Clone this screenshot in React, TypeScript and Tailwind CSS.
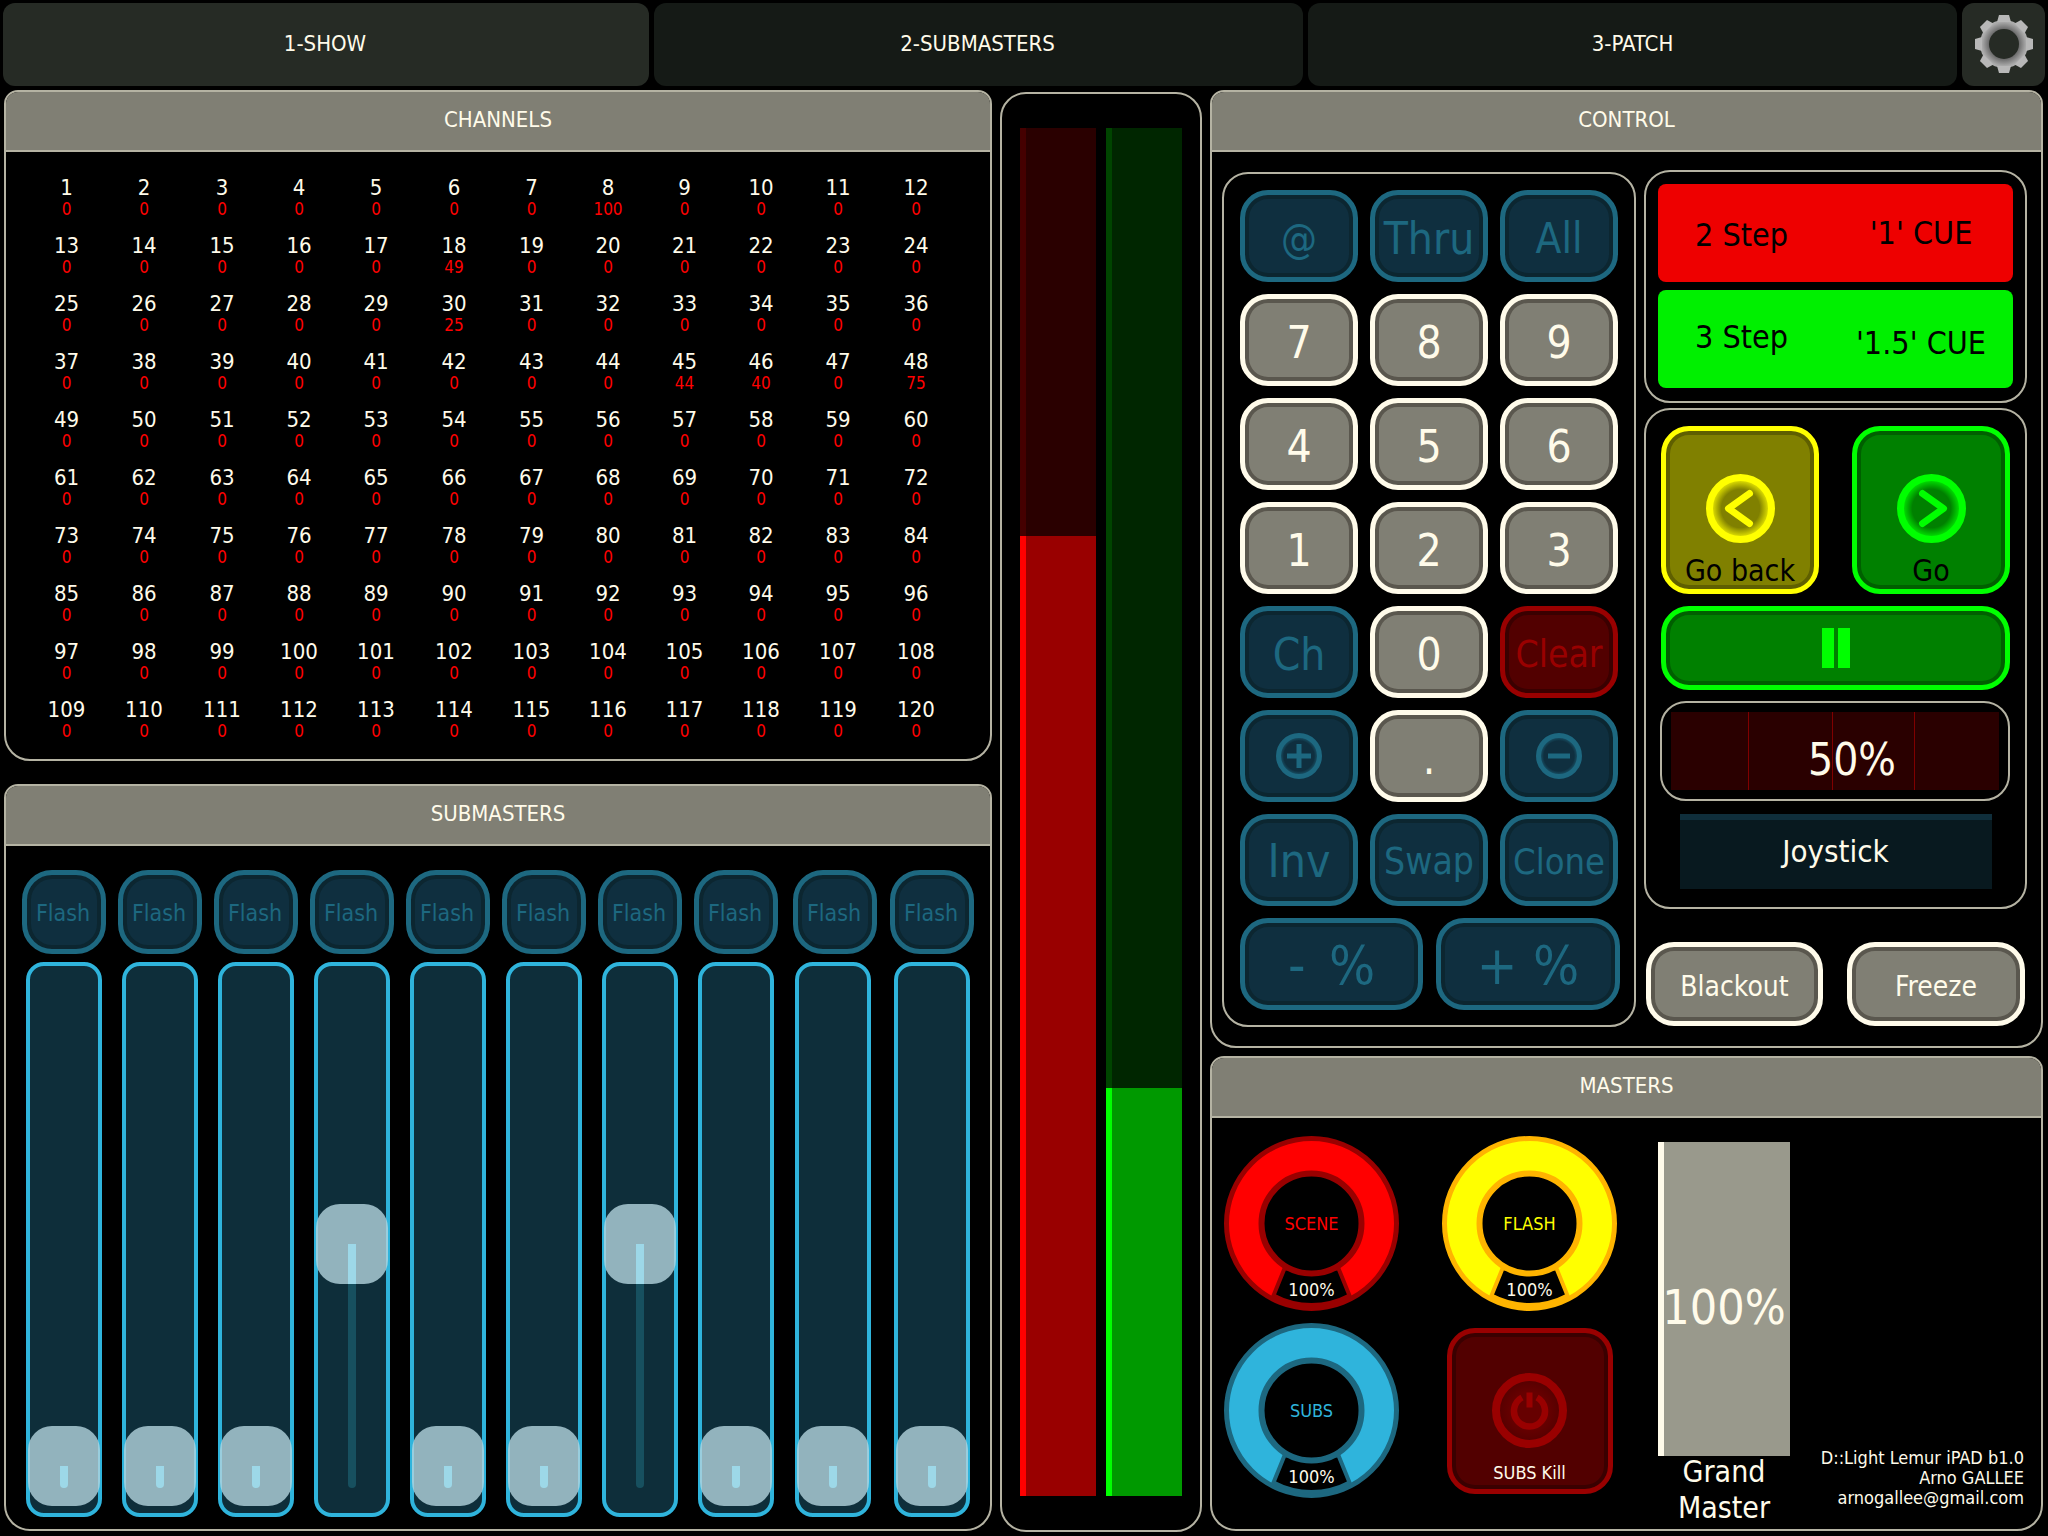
import type { ReactNode } from 'react';

const channelValues: Record<number, number> = { 8: 100, 18: 49, 30: 25, 45: 44, 46: 40, 48: 75 };

function Panel({ title, className, children }: { title: string; className: string; children: ReactNode }) {
    return (
        <section className={`border-2 border-[#b5b3a3] rounded-t-[14px] rounded-b-[26px] overflow-hidden bg-black flex flex-col ${className}`}>
            <div className="h-[60px] shrink-0 bg-[#807f74] border-b-2 border-[#b5b3a3] flex items-center justify-center text-[22px] text-[#fffbea] pb-[3px]">
                {title}
            </div>
            {children}
        </section>
    );
}

const tones = {
    cream: 'border-[#fffbea] bg-[#807f74] text-[#fffbea] shadow-[inset_0_0_0_4px_#5a574e]',
    blue: 'border-[#1d6880] bg-[#0f2f3f] text-[#1d6880] shadow-[inset_0_0_0_4px_#0c2630]',
    red: 'border-[#990000] bg-[#520000] text-[#990000] shadow-[inset_0_0_0_4px_#3a0000]',
    yellow: 'border-[#ffff00] bg-[#808000] text-black shadow-[inset_0_0_0_4px_#5f5f00]',
    green: 'border-[#00ff00] bg-[#008000] text-black shadow-[inset_0_0_0_4px_#005f00]',
};

function Key({ tone, className = '', children }: { tone: keyof typeof tones; className?: string; children: ReactNode }) {
    return (
        <div className={`relative shrink-0 rounded-[28px] border-[5px] flex items-center ${tones[tone]} ${className}`}>
            {children}
        </div>
    );
}

function RoundIcon({ color, bg, children, id, size = 69 }: { color: string; bg: string; children: ReactNode; id: string; size?: number }) {
    return (
        <svg width={size} height={size} viewBox="-34.5 -34.5 69 69" className="shrink-0">
            <defs>
                <radialGradient id={id} cx="0" cy="0" r="31" gradientUnits="userSpaceOnUse">
                    <stop offset="0.62" stopColor={bg} />
                    <stop offset="1" stopColor={color} />
                </radialGradient>
            </defs>
            <circle r="31" fill={`url(#${id})`} stroke={color} strokeWidth="7" />
            {children}
        </svg>
    );
}

function Gear() {
    return (
        <svg width="60" height="60" viewBox="-30 -30 60 60">
            <defs>
                <radialGradient id="gearFill" cx="0" cy="0" r="29" gradientUnits="userSpaceOnUse">
                    <stop offset="0.5" stopColor="#666666" />
                    <stop offset="0.75" stopColor="#a8a8a8" />
                    <stop offset="1" stopColor="#c4c4c4" />
                </radialGradient>
            </defs>
            <circle r="24" fill="url(#gearFill)" />
            {[0, 45, 90, 135, 180, 225, 270, 315].map((deg) => (
                <polygon key={deg} points="-7,-22 -5,-29 5,-29 7,-22" fill="#b8b8b8" transform={`rotate(${deg})`} />
            ))}
            <circle r="15" fill="#262b25" />
        </svg>
    );
}

function Ring({ label, color, edge, labelColor }: { label: string; color: string; edge: string; labelColor: string }) {
    return (
        <div className="relative w-[175px] h-[175px]">
            <svg width="175" height="175" viewBox="-87.5 -87.5 175 175">
                <circle r="85" fill={color} stroke={edge} strokeWidth="5" />
                <path d="M -27 45 L -38 72 A 81 81 0 0 0 38 72 L 27 45 Z" fill="black" stroke={edge} strokeWidth="4" />
                <circle r="50" fill="black" stroke={edge} strokeWidth="6" />
            </svg>
            <div className={`absolute inset-0 flex items-center justify-center text-[18px] pb-[1px] ${labelColor}`}>{label}</div>
            <div className="absolute left-0 right-0 top-[143px] text-center text-[18px] leading-[22px] text-[#fffbea]">100%</div>
        </div>
    );
}

function Meter({ dim, dimEdge, fill, edge, fillHeight }: { dim: string; dimEdge: string; fill: string; edge: string; fillHeight: string }) {
    return (
        <div className="w-[76px] h-full flex flex-col">
            <div className={`flex-1 border-l-[6px] ${dim} ${dimEdge}`} />
            <div className={`border-l-[6px] ${fill} ${edge} ${fillHeight}`} />
        </div>
    );
}

function Fader({ raised = false, className = '' }: { raised?: boolean; className?: string }) {
    return (
        <div className={`relative w-[76px] h-[555px] mx-auto mt-2 border-4 border-[#2fb4dc] rounded-[18px] bg-[#0e2e3a] ${className}`}>
            <div className={`absolute left-[30px] w-2 bottom-[25px] rounded-b-[4px] bg-[#17505f] ${raised ? 'top-[278px]' : 'top-[500px]'}`} />
            <div className={`absolute left-[-2px] right-[-2px] h-20 rounded-[24px] bg-[#b4d4df]/80 ${raised ? 'top-[238px]' : 'top-[460px]'}`} />
            <div className={`absolute left-[30px] w-2 bg-[#9dd8e8] ${raised ? 'top-[278px] h-10' : 'top-[500px] h-[22px] rounded-b-[4px]'}`} />
        </div>
    );
}

function SubmasterStrip({ raised, className = '', faderClass = '' }: { raised?: boolean; className?: string; faderClass?: string }) {
    return (
        <div className={`w-[84px] shrink-0 ${className}`}>
            <Key tone="blue" className="h-[84px] text-[23px] rounded-[30px] justify-center pt-[2px] pr-[2px]">Flash</Key>
            <Fader raised={raised} className={faderClass} />
        </div>
    );
}

export default function App() {
    const channels = Array.from({ length: 120 }, (_, i) => i + 1);

    return (
        <div className="w-[2048px] h-[1536px] bg-black overflow-hidden font-['DejaVu_Sans_Condensed','DejaVu_Sans',sans-serif] font-stretch-condensed text-[#fffbea]">
            {/* tabs */}
            <div className="flex gap-[5px] pt-[3px] pl-[3px] h-[86px]">
                <div className="w-[646px] rounded-[12px] bg-[#262b25] flex items-center justify-center text-[22px] pb-[3px] pr-[2px]">1-SHOW</div>
                <div className="w-[649px] rounded-[12px] bg-[#151a16] flex items-center justify-center text-[22px] pb-[3px] pr-[2px]">2-SUBMASTERS</div>
                <div className="w-[649px] rounded-[12px] bg-[#151a16] flex items-center justify-center text-[22px] pb-[3px]">3-PATCH</div>
                <div className="w-[83px] rounded-[12px] bg-[#262b25] flex items-center justify-center pb-[2px]">
                    <Gear />
                </div>
            </div>

            <div className="flex pt-1 pl-1">
                {/* left column */}
                <div className="w-[988px] shrink-0">
                    <Panel title="CHANNELS" className="h-[671px]">
                        <div className="grid grid-cols-[77px_78px_78px_76px_78px_78px_77px_76px_77px_76px_78px_78px] auto-rows-[58px] pl-[22px] pt-[25px]">
                            {channels.map((n) => (
                                <div key={n} className="text-center">
                                    <div className="text-[22px] leading-[22px]">{n}</div>
                                    <div className="text-[17px] leading-[21px] text-[#ff0000]">{channelValues[n] ?? 0}</div>
                                </div>
                            ))}
                        </div>
                    </Panel>
                    <Panel title="SUBMASTERS" className="h-[747px] mt-[23px]">
                        <div className="flex gap-3 pl-4 pt-[24px]">
                            <SubmasterStrip />
                            <SubmasterStrip />
                            <SubmasterStrip />
                            <SubmasterStrip raised />
                            <SubmasterStrip />
                            <SubmasterStrip />
                            <SubmasterStrip raised />
                            <SubmasterStrip className="mr-[3px]" />
                            <SubmasterStrip className="mr-px" faderClass="-translate-x-[2px]" />
                            <SubmasterStrip />
                        </div>
                    </Panel>
                </div>

                {/* meters */}
                <div className="w-[202px] h-[1440px] shrink-0 ml-2 mt-[2px] border-2 border-[#b5b3a3] rounded-[26px] flex gap-[10px] pl-[18px] pt-[34px] pb-[34px]">
                    <Meter dim="bg-[#2a0000]" dimEdge="border-[#450000]" fill="bg-[#990000]" edge="border-[#ff0000]" fillHeight="h-[960px]" />
                    <Meter dim="bg-[#002600]" dimEdge="border-[#004400]" fill="bg-[#009900]" edge="border-[#00ff00]" fillHeight="h-[408px]" />
                </div>

                {/* right column */}
                <div className="w-[833px] shrink-0 ml-2">
                    <Panel title="CONTROL" className="h-[958px]">
                        <div className="flex items-start pl-[10px]">
                            <div className="w-[414px] h-[855px] mt-5 border-2 border-[#b5b3a3] rounded-[26px] pl-[16px] pt-4">
                                <div className="grid grid-cols-[repeat(3,118px)] auto-rows-[92px] gap-x-3 gap-y-3">
                                    <Key tone="blue" className="justify-center text-[40px] pt-[5px]">@</Key>
                                    <Key tone="blue" className="justify-center text-[44px] pt-[5px]">Thru</Key>
                                    <Key tone="blue" className="justify-center text-[42px] pt-[5px]">All</Key>
                                    <Key tone="cream" className="justify-center text-[44px] pt-[5px]">7</Key>
                                    <Key tone="cream" className="justify-center text-[44px] pt-[5px]">8</Key>
                                    <Key tone="cream" className="justify-center text-[44px] pt-[5px]">9</Key>
                                    <Key tone="cream" className="justify-center text-[44px] pt-[5px]">4</Key>
                                    <Key tone="cream" className="justify-center text-[44px] pt-[5px]">5</Key>
                                    <Key tone="cream" className="justify-center text-[44px] pt-[5px]">6</Key>
                                    <Key tone="cream" className="justify-center text-[44px] pt-[5px]">1</Key>
                                    <Key tone="cream" className="justify-center text-[44px] pt-[5px]">2</Key>
                                    <Key tone="cream" className="justify-center text-[44px] pt-[5px]">3</Key>
                                    <Key tone="blue" className="justify-center text-[44px] pt-[5px]">Ch</Key>
                                    <Key tone="cream" className="justify-center text-[44px] pt-[5px]">0</Key>
                                    <Key tone="red" className="justify-center text-[37px] pt-[5px]">Clear</Key>
                                    <Key tone="blue" className="justify-center">
                                        <svg width="46" height="46" viewBox="-23 -23 46 46">
                                            <defs>
                                                <radialGradient id="plusFill" cx="0" cy="0" r="21" gradientUnits="userSpaceOnUse">
                                                    <stop offset="0.72" stopColor="#0f2f3f" />
                                                    <stop offset="1" stopColor="#1d6880" />
                                                </radialGradient>
                                            </defs>
                                            <circle r="20.5" fill="url(#plusFill)" stroke="#1d6880" strokeWidth="5" />
                                            <path d="M-12 0H12M0-12V12" stroke="#1d6880" strokeWidth="5" />
                                        </svg>
                                    </Key>
                                    <Key tone="cream" className="justify-center text-[44px] pt-[5px]">.</Key>
                                    <Key tone="blue" className="justify-center">
                                        <svg width="46" height="46" viewBox="-23 -23 46 46">
                                            <circle r="20.5" fill="url(#plusFill)" stroke="#1d6880" strokeWidth="5" />
                                            <path d="M-11 0H11" stroke="#1d6880" strokeWidth="5" />
                                        </svg>
                                    </Key>
                                    <Key tone="blue" className="justify-center text-[46px] pt-[3px]">Inv</Key>
                                    <Key tone="blue" className="justify-center text-[37px] pt-[3px]">Swap</Key>
                                    <Key tone="blue" className="justify-center text-[36px] pt-[3px]">Clone</Key>
                                    <div className="col-span-3 flex gap-[13px]">
                                        <Key tone="blue" className="w-[183px] justify-center text-[54px] pt-[2px] [word-spacing:8px]">- %</Key>
                                        <Key tone="blue" className="w-[184px] justify-center text-[54px] pt-[2px]">+ %</Key>
                                    </div>
                                </div>
                            </div>

                            <div className="w-[383px] ml-2 mt-[18px]">
                                <div className="h-[233px] border-2 border-[#b5b3a3] rounded-[26px] px-3 pt-3">
                                    <div className="h-[98px] rounded-[8px] bg-[#ee0000] text-black flex items-center justify-between pl-[37px] text-[32px]">
                                        <span className="mt-1">2 Step</span>
                                        <span className="w-[184px] text-center">'1' CUE</span>
                                    </div>
                                    <div className="h-[98px] mt-2 rounded-[8px] bg-[#00f000] text-black flex items-center justify-between pl-[37px] text-[32px]">
                                        <span className="mb-1">3 Step</span>
                                        <span className="w-[184px] text-center mt-2">'1.5' CUE</span>
                                    </div>
                                </div>

                                <div className="h-[501px] mt-[5px] border-2 border-[#b5b3a3] rounded-[26px] px-[15px] pt-4">
                                    <div className="flex justify-between">
                                        <Key tone="yellow" className="w-[158px] h-[168px] flex-col text-[30px] pt-[43px]">
                                            <RoundIcon id="backGlow" color="#ffff00" bg="#808000">
                                                <path d="M9 -15L-12 0L9 15" fill="none" stroke="#ffff00" strokeWidth="7" strokeLinecap="round" strokeLinejoin="round" />
                                            </RoundIcon>
                                            <span className="leading-[36px] mt-[10px]">Go back</span>
                                        </Key>
                                        <Key tone="green" className="w-[158px] h-[168px] flex-col text-[30px] pt-[43px]">
                                            <RoundIcon id="goGlow" color="#00ff00" bg="#008000">
                                                <path d="M-9 -15L12 0L-9 15" fill="none" stroke="#00ff00" strokeWidth="7" strokeLinecap="round" strokeLinejoin="round" />
                                            </RoundIcon>
                                            <span className="leading-[36px] mt-[10px]">Go</span>
                                        </Key>
                                    </div>
                                    <Key tone="green" className="h-[84px] mt-3 gap-1 justify-center">
                                        <span className="w-3 h-10 bg-[#00ff00]" />
                                        <span className="w-3 h-10 bg-[#00ff00]" />
                                    </Key>
                                    <div className="h-[100px] w-[350px] -ml-px mt-[11px] border-2 border-[#b5b3a3] rounded-[26px] px-[9px] py-[9px]">
                                        <div className="relative h-[78px] bg-[#2a0000] flex items-center justify-center text-[44px] pl-[34px] pt-[18px]">
                                            <span className="absolute left-[77px] top-0 bottom-0 w-px bg-[#800000]" />
                                            <span className="absolute left-[161px] top-0 bottom-0 w-px bg-[#800000]" />
                                            <span className="absolute left-[243px] top-0 bottom-0 w-px bg-[#800000]" />
                                            <span className="relative">50%</span>
                                        </div>
                                    </div>
                                    <div className="w-[312px] h-[75px] mx-auto mt-[13px] bg-[#08191f] border-t-[6px] border-[#0f2e3b] flex items-center justify-center text-[31px] pb-[6px]">
                                        Joystick
                                    </div>
                                </div>

                                <div className="flex gap-6 mt-[33px] ml-[2px]">
                                    <Key tone="cream" className="w-[177px] h-[84px] justify-center text-[28px] pt-[6px]">Blackout</Key>
                                    <Key tone="cream" className="w-[178px] h-[84px] justify-center text-[28px] pt-[6px]">Freeze</Key>
                                </div>
                            </div>
                        </div>
                    </Panel>

                    <Panel title="MASTERS" className="h-[475px] mt-2">
                        <div className="flex flex-1 pl-3 pt-[18px]">
                            <div className="grid grid-cols-[175px_175px] auto-rows-[175px] gap-x-[43px] gap-y-3">
                                <Ring label="SCENE" color="#ff0000" edge="#990000" labelColor="text-[#ff0000]" />
                                <Ring label="FLASH" color="#ffff00" edge="#ffb400" labelColor="text-[#ffff00]" />
                                <Ring label="SUBS" color="#2fb4dc" edge="#1d6880" labelColor="text-[#2fb4dc]" />
                                <div className="flex items-center justify-center">
                                    <Key tone="red" className="w-[166px] h-[166px] flex-col text-[18px] pt-[40px]">
                                        <svg width="75" height="75" viewBox="-37.5 -37.5 75 75" className="shrink-0">
                                            <defs>
                                                <radialGradient id="killGlow" cx="0" cy="0" r="34" gradientUnits="userSpaceOnUse">
                                                    <stop offset="0.55" stopColor="#660000" />
                                                    <stop offset="1" stopColor="#520000" />
                                                </radialGradient>
                                            </defs>
                                            <circle r="33.5" fill="url(#killGlow)" stroke="#990000" strokeWidth="8" />
                                            <path d="M-7.5 -13 A15.5 15.5 0 1 0 7.5 -13" fill="none" stroke="#990000" strokeWidth="6.5" />
                                            <path d="M0 -18V-3" stroke="#990000" strokeWidth="6" />
                                        </svg>
                                        <span className="text-[#fffbea] mt-[13px] leading-[24px]">SUBS Kill</span>
                                    </Key>
                                </div>
                            </div>

                            <div className="w-[132px] ml-[41px] mt-[6px] shrink-0 text-center">
                                <div className="h-[314px] bg-[#99998c] border-l-[6px] border-[#fffbea] flex items-center justify-center text-[48px] pt-[16px] pr-[6px]">100%</div>
                                <div className="text-[30px] leading-[36px] -mt-[2px]">Grand<br />Master</div>
                            </div>

                            <div className="flex-1 flex flex-col justify-end items-end text-[18px] leading-[20px] pr-[17px] pb-[21px]">
                                <div>D::Light Lemur iPAD b1.0</div>
                                <div>Arno GALLEE</div>
                                <div>arnogallee@gmail.com</div>
                            </div>
                        </div>
                    </Panel>
                </div>
            </div>
        </div>
    );
}
